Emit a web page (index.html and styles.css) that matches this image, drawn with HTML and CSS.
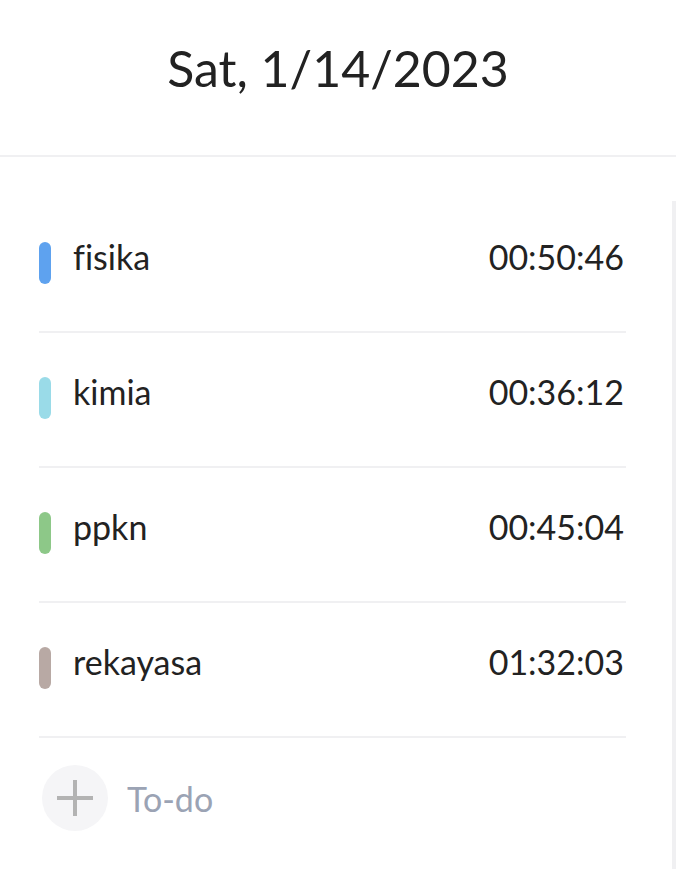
FILE: index.html
```html
<!DOCTYPE html>
<html lang="en">
<head>
  <meta charset="UTF-8" />
  <meta name="viewport" content="width=device-width, initial-scale=1.0" />
  <title>Study log</title>
  <link rel="stylesheet" href="styles.css">
</head>
<body>
  <header class="header">
    <h1>Sat, 1/14/2023</h1>
  </header>

  <main class="content">
    <div class="list">
      <div class="row">
        <span class="tag" style="background:#5ea2ef"></span>
        <span class="name">fisika</span>
        <span class="time">00:50:46</span>
      </div>
      <div class="row">
        <span class="tag" style="background:#9adbe8"></span>
        <span class="name">kimia</span>
        <span class="time">00:36:12</span>
      </div>
      <div class="row">
        <span class="tag" style="background:#8dc888"></span>
        <span class="name">ppkn</span>
        <span class="time">00:45:04</span>
      </div>
      <div class="row">
        <span class="tag" style="background:#b8a9a4"></span>
        <span class="name">rekayasa</span>
        <span class="time">01:32:03</span>
      </div>

      <div class="add">
        <span class="add-btn">
          <svg width="36" height="36" viewBox="0 0 36 36">
            <path d="M18 0v36M0 18h36" stroke="#b3b3b3" stroke-width="4" fill="none"/>
          </svg>
        </span>
        <span class="add-label">To-do</span>
      </div>
    </div>
    <div class="side"></div>
  </main>
</body>
</html>
```

FILE: styles.css
```css
:root {
  --text: #222;
  --line: #f0f0f2;
  --muted: #9ba3b4;
}

* {
  box-sizing: border-box;
}

body {
  margin: 0;
  font-family: 'Lato', sans-serif;
  font-variant-ligatures: none;
  background: #fff;
  color: var(--text);
}

.header {
  height: 157px;
  border-bottom: 2px solid var(--line);
  display: flex;
  align-items: center;
  justify-content: center;
  padding-bottom: 20px;
}

.header h1 {
  margin: 0;
  font-size: 50px;
  font-weight: 400;
}

.content {
  display: flex;
  padding-top: 41px;
}

.list {
  width: 587px;
  margin-left: 39px;
}

.row {
  height: 135px;
  display: flex;
  align-items: center;
  border-bottom: 2px solid var(--line);
  padding-bottom: 4px;
  font-size: 34px;
}

.tag {
  width: 12px;
  height: 42px;
  border-radius: 6px;
  margin-right: 22px;
}

.name {
  flex: 1;
  padding-bottom: 12px;
}

.time {
  margin-right: 2px;
  padding-bottom: 12px;
}

.add {
  display: flex;
  align-items: center;
  padding-top: 27px;
  margin-left: 3px;
}

.add-btn {
  width: 66px;
  height: 66px;
  border-radius: 50%;
  background: #f5f5f7;
  display: flex;
  align-items: center;
  justify-content: center;
}

.add-label {
  margin-left: 19px;
  font-size: 34px;
  color: var(--muted);
}

.side {
  margin-left: auto;
  margin-top: 3px;
  width: 4px;
  min-height: 700px;
  background: var(--line);
}
```
